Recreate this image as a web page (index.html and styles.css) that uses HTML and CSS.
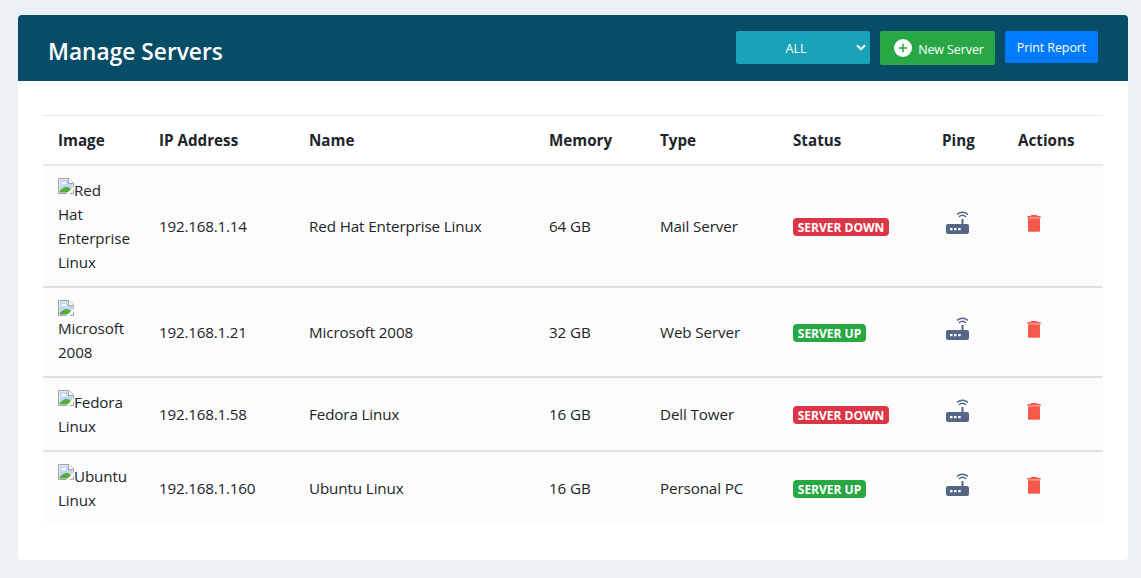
FILE: index.html
```
<!DOCTYPE html>
<html lang="en">
<head>
<meta charset="utf-8">
<title>Manage Servers</title>
<link rel="stylesheet" href="styles.css">
</head>
<body>
<svg class="sprite" aria-hidden="true">
  <symbol id="missing" viewBox="0 0 16 16">
    <path d="M.5.5H11l4.500 4.500v10.500H.5z" fill="#fff" stroke="#a3a3a3"/>
    <path d="M1.500 1.500h9v4h4v9h-13z" fill="#c3d5f5"/>
    <path d="M3 6.200a1.500 1.500 0 0 1 1.500-1.600 1.900 1.900 0 0 1 3.500.4 1 1 0 0 1 .2 1.200z" fill="#fff"/>
    <path d="M1.500 14.500v-1.500C4 11 6 9 8.500 9s4 1.500 4.500 3l-2.500 2.500z" fill="#57ad3b"/>
    <path d="M10.500.5v5h5" fill="#fff" stroke="#a3a3a3"/>
    <path d="M8 16 16 8.500v3L11.500 16z" fill="#fcfcfc"/>
  </symbol>
  <symbol id="router" viewBox="0 0 24 24">
    <path fill-rule="evenodd" d="M15.500 8h2v5H21a2 2 0 0 1 2 2v6a2 2 0 0 1-2 2H2a2 2 0 0 1-2-2v-6a2 2 0 0 1 2-2h13.500zM4 17v2.300h2.500V17zm4 0v2.300h2.500V17zm4.200 0v2.300h2.500V17z" fill="#566687"/>
    <path d="M11 3.400Q16.500-1 22 3.400M12.900 5.900Q16.500 2.800 20.100 5.900" fill="none" stroke="#566687" stroke-width="1.400"/>
  </symbol>
  <symbol id="trash" viewBox="0 0 14 17">
    <path d="M4.200 0h5.600l.8 1H13.500v2H.5V1h2.900z" fill="#f6594c"/>
    <path d="M1 3h12v12.500a1.200 1.200 0 0 1-1.200 1.200H2.200A1.200 1.200 0 0 1 1 15.500z" fill="#f6594c"/>
    <path d="M.5 2.200h13v1.300H.5z" fill="#faa39b"/>
  </symbol>
</svg>
<main class="card">
  <header class="card-header">
    <h1 class="title">Manage Servers</h1>
    <div class="tools">
      <div class="filter"><span>ALL</span><svg class="chevron" viewBox="0 0 10 7"><path d="M1 1.200 5 5.200 9 1.200"/></svg></div>
      <button class="btn new"><svg class="plus" viewBox="0 0 18 18"><circle cx="9" cy="9" r="9" fill="#fff"/><path d="M9 4.800v8.400M4.800 9h8.400" stroke="#28a745" stroke-width="1.500"/></svg><span>New Server</span></button>
      <button class="btn print"><span>Print Report</span></button>
    </div>
  </header>
  <section class="card-body">
    <table class="servers">
      <colgroup><col class="c-image"><col class="c-ip"><col class="c-name"><col class="c-memory"><col class="c-type"><col class="c-status"><col class="c-ping"><col class="c-actions"></colgroup>
      <thead><tr><th>Image</th><th>IP Address</th><th>Name</th><th>Memory</th><th>Type</th><th>Status</th><th>Ping</th><th>Actions</th></tr></thead>
      <tbody>
        <tr><td class="image"><svg class="missing"><use href="#missing"/></svg>Red<br>Hat<br>Enterprise<br>Linux</td><td class="ip">192.168.1.14</td><td>Red Hat Enterprise Linux</td><td>64 GB</td><td>Mail Server</td><td><span class="badge down">SERVER DOWN</span></td><td class="ping"><svg class="router"><use href="#router"/></svg></td><td class="actions"><svg class="trash"><use href="#trash"/></svg></td></tr>
        <tr><td class="image"><svg class="missing alone"><use href="#missing"/></svg>Microsoft<br>2008</td><td class="ip">192.168.1.21</td><td>Microsoft 2008</td><td>32 GB</td><td>Web Server</td><td><span class="badge up">SERVER UP</span></td><td class="ping"><svg class="router"><use href="#router"/></svg></td><td class="actions"><svg class="trash"><use href="#trash"/></svg></td></tr>
        <tr><td class="image"><svg class="missing"><use href="#missing"/></svg>Fedora<br>Linux</td><td class="ip">192.168.1.58</td><td>Fedora Linux</td><td>16 GB</td><td>Dell Tower</td><td><span class="badge down">SERVER DOWN</span></td><td class="ping"><svg class="router"><use href="#router"/></svg></td><td class="actions"><svg class="trash"><use href="#trash"/></svg></td></tr>
        <tr><td class="image"><svg class="missing"><use href="#missing"/></svg>Ubuntu<br>Linux</td><td class="ip">192.168.1.160</td><td>Ubuntu Linux</td><td>16 GB</td><td>Personal PC</td><td><span class="badge up">SERVER UP</span></td><td class="ping"><svg class="router"><use href="#router"/></svg></td><td class="actions"><svg class="trash"><use href="#trash"/></svg></td></tr>
      </tbody>
    </table>
  </section>
</main>
</body>
</html>
```
FILE: styles.css
```
* { box-sizing: border-box; }
body {
  margin: 0;
  padding: 15px 13px 18px 18px;
  background: #ecf0f5;
  color: #212529;
  font: 15.2px/24px "Open Sans", "Noto Sans", sans-serif;
}
.sprite { display: none; }
.card { height: 545px; border-radius: 4px; background: #fff; overflow: hidden; }
.card-header {
  display: flex;
  justify-content: space-between;
  align-items: flex-start;
  height: 66px;
  padding: 16px 30px 0;
  background: #084d68;
  color: #fff;
}
.title { margin: 6px 0 0; font-size: 22.700px; line-height: 30px; font-weight: 600; letter-spacing: 0.02px; white-space: nowrap; }
.tools { display: flex; align-items: flex-start; gap: 10px; font-size: 12.500px; }
.filter {
  position: relative;
  display: flex;
  align-items: center;
  justify-content: center;
  width: 134px;
  height: 33px;
  padding: 2px 14px 0 0;
  border-radius: 2px;
  background: #19a2b8;
}
.chevron { position: absolute; right: 4px; top: 13px; width: 10px; height: 7px; fill: none; stroke: #fff; stroke-width: 2; }
.btn {
  display: flex;
  align-items: center;
  justify-content: center;
  padding: 0;
  border: 0;
  border-radius: 2px;
  color: #fff;
  font: 12.500px/20px "Open Sans", "Noto Sans", sans-serif;
  letter-spacing: -0.1px;
  white-space: nowrap;
}
.new { width: 115px; height: 34px; padding-left: 3px; gap: 6px; background: #28a745; }
.new span { padding-top: 3px; }
.plus { width: 18px; height: 18px; }
.print { width: 93px; height: 32px; padding-top: 2px; background: #007bff; }
.card-body { padding: 34px 25px 0; }
.servers { width: 1060px; table-layout: fixed; border-spacing: 0; border-top: 1px solid #e9e9e9; }
.c-image { width: 101px; }
.c-ip { width: 150px; }
.c-name { width: 240px; }
.c-memory { width: 111px; }
.c-type { width: 133px; }
.c-status { width: 149px; }
.c-ping { width: 76px; }
.c-actions { width: 100px; }
th, td { padding: 12px 15px; text-align: left; vertical-align: middle; white-space: nowrap; }
th { border-bottom: 2px solid #e9e9e9; font-weight: 700; }
td { background: #fcfcfc; border-bottom: 2px solid #dee2e6; letter-spacing: -0.12px; }
td.ip { letter-spacing: -0.2px; }
tbody tr:last-child td { border-bottom: 0; }
.missing { float: left; width: 16px; height: 16px; }
.missing.alone { float: none; display: block; }
.badge {
  display: block;
  width: 96px;
  height: 18px;
  margin-top: 2px;
  border-radius: 4px;
  color: #fff;
  font-size: 12px;
  line-height: 19px;
  font-weight: 700;
  letter-spacing: 0;
  text-align: center;
}
.down { background: #dc3545; }
.up { width: 73px; background: #28a745; }
.ping { padding: 0 0 7px 19px; }
.router { display: block; width: 24px; height: 24px; }
.actions { padding: 0 0 6px 24px; }
.trash { display: block; width: 14px; height: 17px; }
```
